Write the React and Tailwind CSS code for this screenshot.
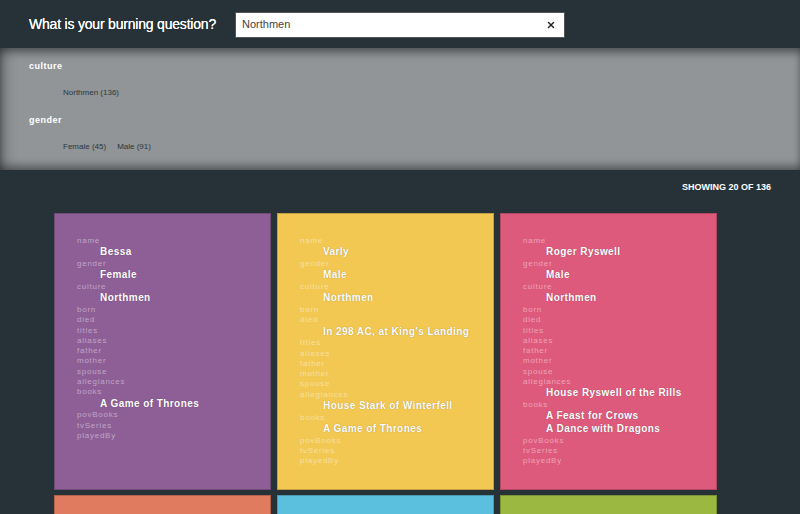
import { X } from "lucide-react";

const FIELDS = [
  "name",
  "gender",
  "culture",
  "born",
  "died",
  "titles",
  "aliases",
  "father",
  "mother",
  "spouse",
  "allegiances",
  "books",
  "povBooks",
  "tvSeries",
  "playedBy",
];

const characters = [
  {
    color: "bg-[#8e5e97]",
    data: {
      name: ["Bessa"],
      gender: ["Female"],
      culture: ["Northmen"],
      books: ["A Game of Thrones"],
    },
  },
  {
    color: "bg-[#f2c853]",
    data: {
      name: ["Varly"],
      gender: ["Male"],
      culture: ["Northmen"],
      died: ["In 298 AC, at King's Landing"],
      allegiances: ["House Stark of Winterfell"],
      books: ["A Game of Thrones"],
    },
  },
  {
    color: "bg-[#de5a7c]",
    data: {
      name: ["Roger Ryswell"],
      gender: ["Male"],
      culture: ["Northmen"],
      allegiances: ["House Ryswell of the Rills"],
      books: ["A Feast for Crows", "A Dance with Dragons"],
    },
  },
  {
    color: "bg-[#e07b5f]",
    data: { name: ["Rickard Karstark"], gender: ["Male"], culture: ["Northmen"] },
  },
  {
    color: "bg-[#5bc0de]",
    data: { name: ["Hallis Mollen"], gender: ["Male"], culture: ["Northmen"] },
  },
  {
    color: "bg-[#9bb840]",
    data: { name: ["Jory Cassel"], gender: ["Male"], culture: ["Northmen"] },
  },
];

const facets = [
  { title: "culture", items: ["Northmen (136)"] },
  { title: "gender", items: ["Female (45)", "Male (91)"] },
];

function Card({ color, data }) {
  return (
    <div className={`${color} border border-black/20 pt-[22px] pb-[22px] pl-[22px]`}>
      {FIELDS.map((f) => (
        <div key={f}>
          <div className="text-[8px] leading-[10.3px] tracking-[0.75px] text-white/45">{f}</div>
          {(data[f] || []).map((v) => (
            <div
              key={v}
              className="pl-[23px] text-[10px] leading-[12.7px] font-bold tracking-[0.43px] text-white [text-shadow:0_0_1px_rgba(0,0,0,0.35)]"
            >
              {v}
            </div>
          ))}
        </div>
      ))}
    </div>
  );
}

export default function App() {
  return (
    <div className="min-h-screen bg-[#263238] font-['Liberation_Sans',Arial,sans-serif] text-white">
      <header className="flex h-[48px] items-center pl-[29px]">
        <h1 className="text-[14px] tracking-[-0.2px] text-white [text-shadow:0_0_0.6px_#fff]">
          What is your burning question?
        </h1>
        <div className="ml-[19px] mt-[1px] flex h-[26px] w-[330px] items-center justify-between border border-[#555] bg-white pl-[6px] pr-[8px]">
          <span className="text-[11px] text-[#444]">Northmen</span>
          <X className="h-[10px] w-[10px] text-[#222]" strokeWidth={3.5} />
        </div>
      </header>

      <section className="bg-[#919598] pl-[29px] pt-[11px] pb-[17px] shadow-[inset_0_7px_10px_-3px_rgba(0,0,0,0.45),inset_0_-7px_10px_-3px_rgba(0,0,0,0.4),inset_10px_0_14px_-6px_rgba(0,0,0,0.3)]">
        {facets.map((g, i) => (
          <div key={g.title} className={i > 0 ? "mt-[14px]" : ""}>
            <div className="text-[9px] leading-[14px] font-bold tracking-[0.5px] text-white">{g.title}</div>
            <div className="mt-[14px] flex gap-[11px] pl-[34px] text-[8px] leading-[12px] text-[#2c3539]">
              {g.items.map((it) => (
                <span key={it}>{it}</span>
              ))}
            </div>
          </div>
        ))}
      </section>

      <div className="flex justify-end pr-[29px] pt-[11px] text-[9px] leading-[12px] font-bold text-white">
        SHOWING 20 OF 136
      </div>

      <div className="mt-[20px] grid w-fit grid-cols-[217px_217px_217px] gap-x-[6px] gap-y-[5px] pl-[54px] pb-[20px]">
        {characters.map((c, i) => (
          <Card key={i} color={c.color} data={c.data} />
        ))}
      </div>
    </div>
  );
}
